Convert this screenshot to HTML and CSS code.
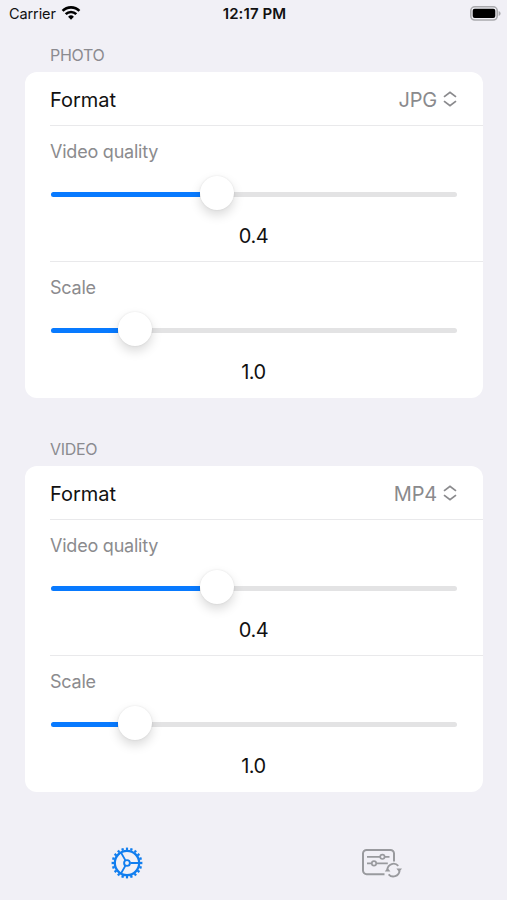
FILE: index.html
```html
<!DOCTYPE html>
<html lang="en">
<head>
<meta charset="utf-8">
<title>Settings</title>
<link rel="stylesheet" href="styles.css">
</head>
<body>
<header class="status">
  <div class="carrier"><span class="carrier-name">Carrier</span>
    <svg class="wifi" width="20" height="14" viewBox="0 0 20 14"><g fill="none" stroke="#000" stroke-width="2.6"><path d="M1.6 4.9a11.8 11.8 0 0 1 16.8 0"/><path d="M4.7 8.2a7.5 7.5 0 0 1 10.6 0"/></g><path d="M10 13.7 7.1 10.8a4.1 4.1 0 0 1 5.8 0z"/></svg>
  </div>
  <span class="clock">12:17 PM</span>
  <svg class="battery" width="31" height="15" viewBox="0 0 31 15"><rect x=".8" y=".8" width="26.4" height="13.2" rx="4" fill="none" stroke="#a9a9ad" stroke-width="1.6"/><rect x="2.7" y="2.7" width="22.6" height="9.4" rx="2"/><path d="M28.6 5v5c1.2-.4 2-1.3 2-2.5s-.8-2.1-2-2.5z" fill="#a9a9ad"/></svg>
</header>
<main class="settings">
  <section class="group">
    <h2 class="heading">PHOTO</h2>
    <div class="card">
      <div class="row format"><span class="label">Format</span><span class="choice">JPG</span><svg class="updown" width="14" height="16" viewBox="0 0 14 16"><path d="M1 5.9 7 1.3l6 4.6M1 10.1l6 4.6 6-4.6"/></svg></div>
      <div class="row setting"><div class="name quality">Video quality</div><div class="slider q"><div class="fill"></div><div class="thumb"></div></div><div class="value">0.4</div></div>
      <div class="row setting"><div class="name scale">Scale</div><div class="slider s"><div class="fill"></div><div class="thumb"></div></div><div class="value one">1.0</div></div>
    </div>
  </section>
  <section class="group">
    <h2 class="heading video">VIDEO</h2>
    <div class="card">
      <div class="row format"><span class="label">Format</span><span class="choice">MP4</span><svg class="updown" width="14" height="16" viewBox="0 0 14 16"><path d="M1 5.9 7 1.3l6 4.6M1 10.1l6 4.6 6-4.6"/></svg></div>
      <div class="row setting"><div class="name quality">Video quality</div><div class="slider q"><div class="fill"></div><div class="thumb"></div></div><div class="value">0.4</div></div>
      <div class="row setting"><div class="name scale">Scale</div><div class="slider s"><div class="fill"></div><div class="thumb"></div></div><div class="value one">1.0</div></div>
    </div>
  </section>
</main>
<nav class="tabs">
  <div class="tab">
    <svg width="32" height="32" viewBox="-16 -16 32 32" fill="none" stroke="#117eef"><circle r="12.2" stroke-width="2.3"/><circle r="14.2" stroke-width="2.4" pathLength="40" stroke-dasharray="1 1" stroke-dashoffset=".5"/><circle r="2.9" stroke-width="1.9"/><path d="M3.4 0H12M-1.7-2.9-6.1-10.6M-1.7 2.9-6.1 10.6" stroke-width="1.9"/></svg>
  </div>
  <div class="tab">
    <svg class="presets" width="42" height="32" viewBox="361 848 42 32" fill="none" stroke="#999a9e" stroke-width="1.7"><path d="M384.5 875.2H366.6a3.6 3.6 0 0 1-3.6-3.6v-17a3.6 3.6 0 0 1 3.6-3.6h23.8a3.6 3.6 0 0 1 3.6 3.6v8" stroke-width="2"/><path d="M367 857.8h13.2M384.6 857.8h4.9M367 864.4h4.8M376.3 864.4h11.5"/><circle cx="382.4" cy="857.8" r="2.2"/><circle cx="374" cy="864.4" r="2.2"/><path d="M387.3 870.3a6.3 6.3 0 0 1 11-3.4M399.6 871.9a6.3 6.3 0 0 1-11 3.4" stroke-width="1.8"/><path d="m384.8 872.6 2.7-3.9 2.9 3.9zM396.4 869.4h5.6l-2.8 3.9z" fill="#999a9e" stroke="none"/></svg>
  </div>
</nav>
</body>
</html>
```

FILE: styles.css
```css
* { box-sizing: border-box; }
body { margin: 0; width: 507px; height: 900px; overflow: hidden; display: flex; flex-direction: column; background: #f1f0f6; color: #111; font-family: Inter, "Liberation Sans", sans-serif; }
.status { height: 28px; display: grid; grid-template-columns: 1fr auto 1fr; align-items: center; padding: 0 6px 2px 9px; font-size: 14.5px; }
.carrier { display: flex; align-items: center; gap: 5px; }
.carrier-name { letter-spacing: -.1px; }
.wifi { margin-top: -1px; }
.clock { font-weight: 600; font-size: 15px; letter-spacing: .1px; margin-right: 1px; }
.battery { justify-self: end; }
.settings { height: 798px; padding: 18px 24px 0 25px; }
.group { height: 394px; }
.heading { margin: 0; height: 26px; padding-left: 25px; color: #8b8b90; font-size: 16px; line-height: 19px; font-weight: 400; letter-spacing: -.3px; }
.card { height: 326px; border-radius: 12px; background: #fff; padding-left: 25px; }
.row { border-bottom: 1px solid #e9e9eb; }
.row:last-child { border: 0; }
.format { height: 54px; display: flex; align-items: center; padding: 2px 26px 0 0; font-size: 20px; }
.label { flex: 1; letter-spacing: 0; }
.choice { color: #8a8a8d; letter-spacing: -.2px; }
.updown { margin-left: 6px; margin-top: -2px; fill: none; stroke: #8a8a8d; stroke-width: 1.8; }
.setting { height: 136px; display: flex; flex-direction: column; padding: 13px 26px 0 0; }
.name { height: 24px; line-height: 25px; color: #8b8b8e; font-size: 18px; letter-spacing: -.22px; }
.slider { height: 5px; margin: 29px 0 0 1px; display: flex; align-items: center; border-radius: 3px; background: #e3e3e4; }
.fill { height: 5px; border-radius: 3px 0 0 3px; background: #087aff; }
.q .fill { width: 149px; }
.s .fill { width: 67px; }
.thumb { width: 34px; height: 34px; flex: none; border-radius: 50%; background: #fff; margin-top: -3px; box-shadow: 0 5px 11px rgba(0,0,0,.15), 0 0 2px rgba(0,0,0,.10); }
.value { height: 28px; margin-top: 26px; line-height: 27px; font-size: 20px; text-align: center; letter-spacing: -.5px; }
.tabs { height: 74px; display: grid; grid-template-columns: 1fr 1fr; align-items: center; }
.tab { display: flex; justify-content: center; }
.presets { margin-left: 3px; }
```
